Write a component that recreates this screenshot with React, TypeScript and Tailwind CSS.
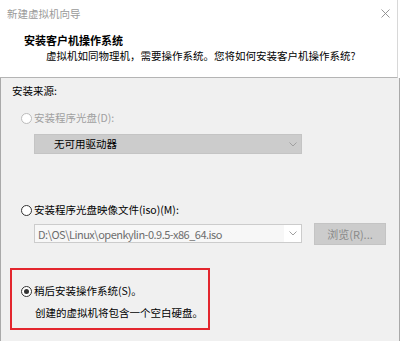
import React from "react";

const font = { fontFamily: '"Noto Sans CJK SC", "Noto Sans", sans-serif' };

function Radio({ checked = false, disabled = false }: { checked?: boolean; disabled?: boolean }) {
  return (
    <span
      className={
        "inline-flex items-center justify-center w-[11px] h-[11px] rounded-full border bg-white shrink-0 " +
        (disabled ? "border-[#bcbcbc]" : "border-[#333333]")
      }
    >
      {checked && <span className="block w-[5px] h-[5px] rounded-full bg-[#333333]" />}
    </span>
  );
}

function Chevron() {
  return (
    <svg width="8" height="5" viewBox="0 0 8 5" className="block">
      <path d="M0.5 0.5 L4 4 L7.5 0.5" fill="none" stroke="#a0a0a0" strokeWidth="1" />
    </svg>
  );
}

export default function App() {
  return (
    <div className="w-[400px] h-[341px] bg-white text-[10.5px] leading-[16px] text-black overflow-hidden" style={font}>
      {/* header */}
      <div className="relative h-[78px] bg-white border-b border-[#b4b4b4] border-r border-r-[#d8d8d8] w-[398px]">
        <div className="pt-[6px] pl-[7px] text-[#9a9a9a] leading-[16px]">新建虚拟机向导</div>
        <svg width="9" height="9" viewBox="0 0 9 9" className="absolute left-[381px] top-[9px]">
          <path d="M0.5 0.5 L8.5 8.5 M8.5 0.5 L0.5 8.5" stroke="#8a8a8a" strokeWidth="0.9" />
        </svg>
        <div className="mt-[10px] pl-[24px] font-bold text-[11px] leading-[16px]">安装客户机操作系统</div>
        <div className="pl-[46px] leading-[16px]">虚拟机如同物理机，需要操作系统。您将如何安装客户机操作系统?</div>
      </div>

      {/* body */}
      <div className="h-[263px] bg-[#f0f0f0] border-l border-r border-[#a9a9a9] flex flex-col">
        <div className="pt-[5px] pl-[11px] leading-[16px]">安装来源:</div>

        <div className="mt-[11px] pl-[20px] flex items-center gap-[2px] h-[16px] text-[#a0a0a0]">
          <Radio disabled />
          <span className="leading-[16px]">安装程序光盘(D):</span>
        </div>

        <div className="mt-[8px] ml-[33px] w-[268px] h-[20px] bg-[#cccccc] border border-[#c4c4c4] flex items-center">
          <span className="pl-[19px] flex-1 text-black leading-[16px]">无可用驱动器</span>
          <span className="w-[16px] flex justify-center">
            <Chevron />
          </span>
        </div>

        <div className="mt-[48px] pl-[20px] flex items-center gap-[2px] h-[16px]">
          <Radio />
          <span className="leading-[16px]">安装程序光盘映像文件(iso)(M):</span>
        </div>

        <div className="mt-[5px] flex items-start h-[22px]">
          <div className="mt-[1px] ml-[33px] w-[268px] h-[19px] bg-[#f7f7f7] border border-[#cccccc] flex items-center">
            <span className="pl-[3px] flex-1 text-[#6d6d6d] text-[11px] tracking-[-0.5px] leading-[16px] whitespace-nowrap">D:\OS\Linux\openkylin-0.9.5-x86_64.iso</span>
            <span className="w-[17px] h-full bg-white flex items-center justify-center">
              <Chevron />
            </span>
          </div>
          <div className="ml-[12px] w-[72px] h-[22px] bg-[#cccccc] border border-[#c4c4c4] flex items-center justify-center text-[#8a8a8a] text-[11px] leading-[16px]">
            浏览(R)...
          </div>
        </div>

        <div className="mt-[23px] ml-[9px] w-[200px] h-[62px] border-2 border-[#e3262e] flex flex-col">
          <div className="pt-[13px] pl-[9px] flex items-center gap-[2px] h-[29px]">
            <Radio checked />
            <span className="leading-[16px]">稍后安装操作系统(S)。</span>
          </div>
          <div className="mt-[6px] pl-[23px] leading-[16px] whitespace-nowrap">创建的虚拟机将包含一个空白硬盘。</div>
        </div>
      </div>
    </div>
  );
}
